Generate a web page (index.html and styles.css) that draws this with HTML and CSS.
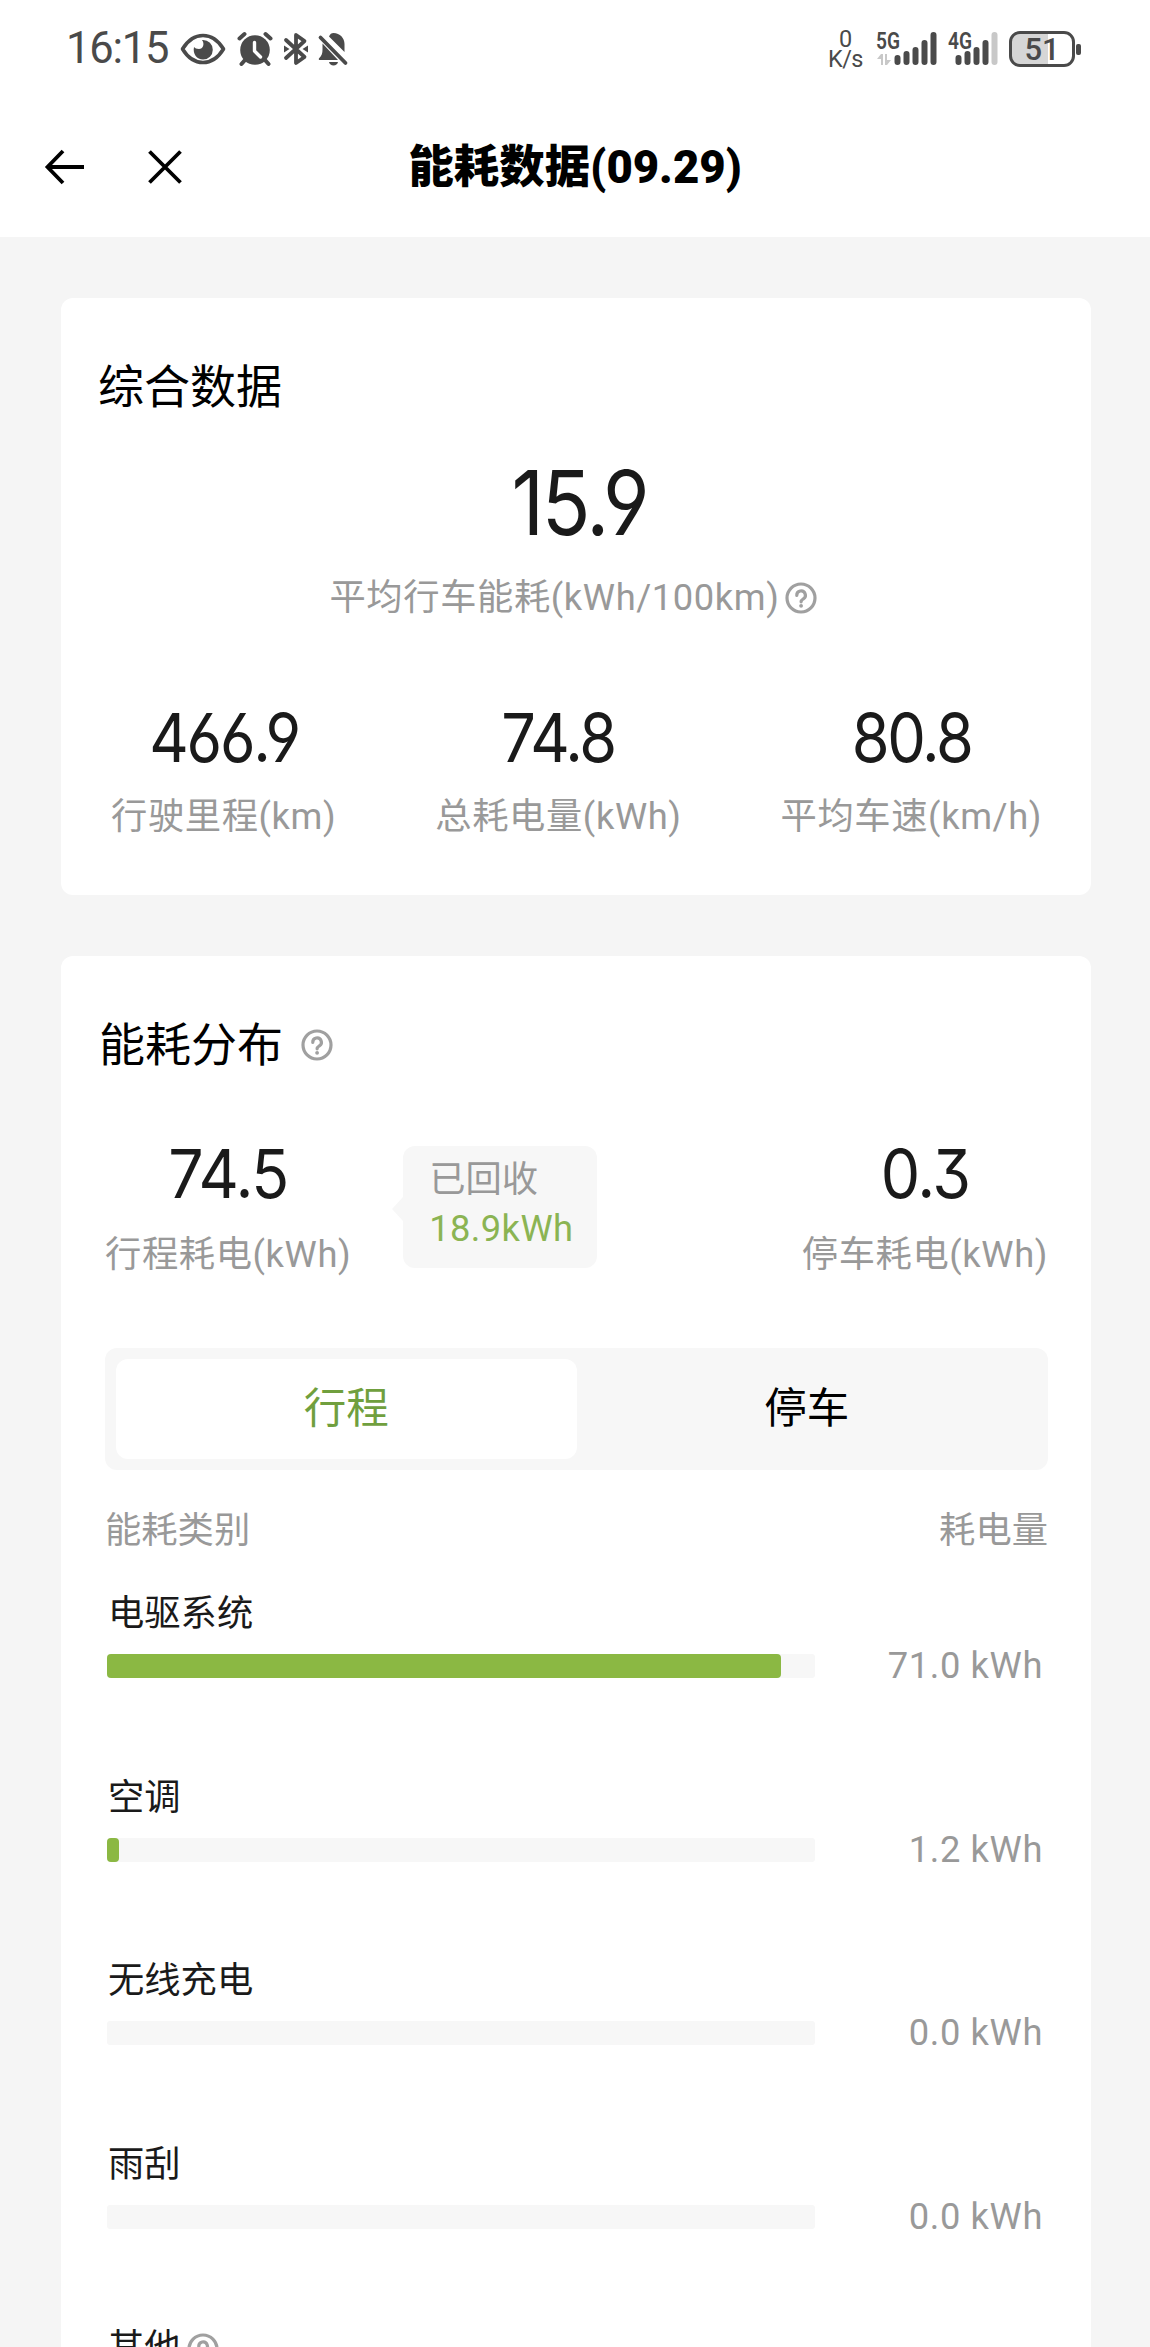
FILE: index.html
```html
<!DOCTYPE html>
<html lang="zh-CN">
<head>
    <meta charset="UTF-8">
    <title>能耗数据(09.29)</title>
    <link rel="stylesheet" href="styles.css">
</head>
<body>

<svg class="defs" width="0" height="0">
    <symbol id="help" viewBox="0 0 32 32">
        <circle cx="16" cy="16" r="14" fill="none" stroke="#a0a0a0" stroke-width="3.2"/>
        <path d="M11.8 13.400a4.300 4.300 0 1 1 6.600 3.400c-1.600 1.100-2.300 1.600-2.300 3" fill="none" stroke="#a0a0a0" stroke-width="3.2" stroke-linecap="round"/>
        <circle cx="16.1" cy="23.800" r="1.9" fill="#a0a0a0"/>
    </symbol>
</svg>

<div class="statusbar">
    <span class="time">16:15</span>
    <svg class="ic-eye" width="46" height="32" viewBox="0 0 46 32">
        <path d="M2.5 16C8 7 15 2.500 23 2.500S38 7 43.500 16C38 25 31 29.500 23 29.500S8 25 2.500 16z" fill="none" stroke="#4a4a4a" stroke-width="3.600" stroke-linejoin="round"/>
        <path d="M22 7c3 4 1 9-3 9-2.500 0-4-1-5-2-1.500 7 3 12.500 9 12.500a9.800 9.800 0 0 0 0-19.600z" fill="#4a4a4a"/>
    </svg>
    <svg class="ic-alarm" width="36" height="34" viewBox="0 0 36 34">
        <circle cx="18" cy="18" r="14.800" fill="#4a4a4a"/>
        <path d="M2.500 6.500L7.500 2M33.500 6.500L28.500 2M8 28l-3.500 4M28 28l3.500 4" stroke="#4a4a4a" stroke-width="4" stroke-linecap="round"/>
        <path d="M17.500 10.500v8.500l6 6" fill="none" stroke="#fff" stroke-width="3.400" stroke-linecap="round" stroke-linejoin="round"/>
    </svg>
    <svg class="ic-bt" width="26" height="34" viewBox="0 0 26 34">
        <path d="M3 8l18.500 17L13 31V3l8.500 6L3 26" fill="none" stroke="#4a4a4a" stroke-width="3.800" stroke-linecap="round" stroke-linejoin="round"/>
        <path d="M1 13.500l5.500 3.500L1 20.500zM25 13.500L19.500 17l5.500 3.500z" fill="#4a4a4a"/>
    </svg>
    <svg class="ic-bell" width="30" height="34" viewBox="0 0 30 34">
        <path d="M4.500 11.500L20 28H1.500c-.8 0-1-1.200-.4-1.800 2.800-2.600 3.400-5 3.400-8.700zM11 4.500C12 2 13.500 1 15.500 1c6.500 0 11 5 11 11v8z" fill="#4a4a4a"/>
        <path d="M2.500 5.500L27.500 31" stroke="#4a4a4a" stroke-width="3.800" stroke-linecap="round"/>
        <path d="M11 30h9c-.5 2.300-2.200 3.500-4.500 3.500S11.500 32.300 11 30z" fill="#4a4a4a"/>
    </svg>

    <div class="netspeed"><span>0</span><span>K/s</span></div>
    <svg class="sig5" width="62" height="36" viewBox="0 0 62 36">
        <text class="net" x="0" y="18" textLength="24" lengthAdjust="spacingAndGlyphs">5G</text>
        <path d="M1 28l4-5h2v11H5v-6zM9 23h2v6h4l-4 5H9z" fill="#c8c8c8"/>
        <g stroke="#4a4a4a" stroke-width="6" stroke-linecap="round">
            <path d="M21.500 27v4M30.500 23v8M39.500 19v12M48.500 12v19M57.500 4v27"/>
        </g>
    </svg>
    <svg class="sig4" width="52" height="36" viewBox="0 0 52 36">
        <text class="net" x="0" y="18" textLength="24" lengthAdjust="spacingAndGlyphs">4G</text>
        <g stroke="#4a4a4a" stroke-width="6" stroke-linecap="round">
            <path d="M10.500 27v4M19.500 23v8M28.500 19v12M37.500 12v19"/>
            <path d="M46.500 4v27" stroke="#c8c8c8"/>
        </g>
    </svg>
    <div class="battery"><span>51</span></div>
    <i class="battery-tip"></i>
</div>

<div class="navbar">
    <svg width="40" height="36" viewBox="0 0 40 36">
        <path d="M18 2L2.500 18 18 34M2.500 18H39" fill="none" stroke="#000" stroke-width="3.800"/>
    </svg>
    <svg width="34" height="34" viewBox="0 0 34 34">
        <path d="M1.500 1.500l31 31M32.500 1.500l-31 31" stroke="#000" stroke-width="3.800"/>
    </svg>
    <h1>能耗数据<span>(09.29)</span></h1>
</div>

<div class="card summary">
    <h2>综合数据</h2>
    <div class="main-value"><span class="num big">15.9</span></div>
    <div class="main-label">平均行车能耗(kWh/100km)<svg class="help"><use href="#help"/></svg></div>
    <div class="stats">
        <div class="stat"><span class="num">466.9</span><span class="label">行驶里程(km)</span></div>
        <div class="stat"><span class="num">74.8</span><span class="label">总耗电量(kWh)</span></div>
        <div class="stat"><span class="num">80.8</span><span class="label">平均车速(km/h)</span></div>
    </div>
</div>

<div class="card detail">
    <h2>能耗分布<svg class="help"><use href="#help"/></svg></h2>
    <div class="split">
        <div class="stat"><span class="num">74.5</span><span class="label">行程耗电(kWh)</span></div>
        <div class="bubble"><span>已回收</span><span class="green">18.9kWh</span></div>
        <div class="stat right"><span class="num">0.3</span><span class="label">停车耗电(kWh)</span></div>
    </div>
    <div class="tabs">
        <div class="tab active">行程</div>
        <div class="tab">停车</div>
    </div>
    <div class="list-head"><span>能耗类别</span><span>耗电量</span></div>
    <div class="row">
        <div class="name">电驱系统</div>
        <div class="line"><div class="track"><div class="fill" style="width: 95.2%"></div></div><span>71.0 kWh</span></div>
    </div>
    <div class="row">
        <div class="name">空调</div>
        <div class="line"><div class="track"><div class="fill" style="width: 1.7%"></div></div><span>1.2 kWh</span></div>
    </div>
    <div class="row">
        <div class="name">无线充电</div>
        <div class="line"><div class="track"></div><span>0.0 kWh</span></div>
    </div>
    <div class="row">
        <div class="name">雨刮</div>
        <div class="line"><div class="track"></div><span>0.0 kWh</span></div>
    </div>
    <div class="row">
        <div class="name">其他<svg class="help"><use href="#help"/></svg></div>
    </div>
</div>

</body>
</html>
```
FILE: styles.css
```css
* {
    box-sizing: border-box;
}

body {
    margin: 0;
    height: 2347px;
    overflow: hidden;
    background-color: #f5f5f5;
    font-family: Roboto, "Noto Sans CJK SC", sans-serif;
    font-size: 36.3px;
    color: #1a1a1a;
}

.defs {
    display: block;
}

svg {
    flex-shrink: 0;
    overflow: visible;
}

/* status bar */
.statusbar {
    display: flex;
    align-items: center;
    height: 98px;
    padding: 0 69px 0 66px;
    background-color: #fff;
    color: #4a4a4a;
}

.time {
    width: 114px;
    font-size: 43.5px;
    line-height: 50px;
    letter-spacing: -1.2px;
}

.ic-alarm {
    margin-left: 11px;
}

.ic-bt {
    margin-left: 10px;
}

.ic-bell {
    margin-left: 9px;
}

.netspeed {
    display: flex;
    flex-direction: column;
    align-items: center;
    margin-left: auto;
    font-size: 23.5px;
    line-height: 20px;
    letter-spacing: -0.5px;
}

.sig5 {
    margin-left: 13px;
}

.sig4 {
    margin-left: 10px;
}

.net {
    font-size: 23px;
    font-weight: 600;
    fill: #4a4a4a;
}

.battery {
    width: 66px;
    height: 36px;
    margin-left: 9px;
    border: 3px solid #4a4a4a;
    border-radius: 11px;
    background: linear-gradient(to right, #d6d6d6 36px, #fff 36px);
    text-align: center;
    font-size: 31px;
    font-weight: 500;
    line-height: 31px;
}

.battery-tip {
    width: 5px;
    height: 11px;
    margin-left: 1px;
    border-radius: 2px;
    background-color: #4a4a4a;
}

/* title bar */
.navbar {
    position: relative;
    display: flex;
    align-items: center;
    gap: 63px;
    height: 139px;
    padding: 0 45px 2px;
    background-color: #fff;
}

.navbar h1 {
    position: absolute;
    left: 0;
    right: 0;
    margin: 3px 0 0;
    text-align: center;
    font-size: 45.5px;
    font-weight: 900;
    line-height: 60px;
    color: #000;
}

/* cards */
.card {
    margin: 61px 59px 0 61px;
    border-radius: 12px;
    background-color: #fff;
}

.card h2 {
    display: flex;
    align-items: center;
    margin: 0;
    font-size: 46px;
    font-weight: 400;
    line-height: 60px;
    color: #000;
}

.help {
    width: 32px;
    height: 32px;
}

.label,
.main-label {
    line-height: 44px;
    letter-spacing: 0.6px;
    color: #999;
    white-space: nowrap;
}

.num {
    font-family: Inter, sans-serif;
    font-feature-settings: "cv03", "cv04", "cv09";
    font-size: 68px;
    line-height: 70px;
    letter-spacing: -2.5px;
    transform: scaleX(0.9);
}

.num.big {
    display: inline-block;
    font-size: 89px;
    line-height: 90px;
}

.split .num {
    letter-spacing: -1.5px;
    transform: scaleX(0.92);
}

.summary {
    height: 597px;
    padding: 59px 49px 0 37px;
}

.main-value {
    margin-top: 41px;
    padding-left: 18px;
    text-align: center;
}

.main-label {
    display: flex;
    justify-content: center;
    align-items: center;
    margin-top: 28px;
    padding-left: 6px;
}

.main-label .help {
    margin: 0 0 0 5px;
}

.stats {
    display: flex;
    justify-content: space-between;
    margin-top: 82px;
    padding-left: 13px;
}

.stat {
    display: flex;
    flex-direction: column;
    align-items: center;
}

.stat .label {
    margin-top: 23px;
}

.detail {
    height: 1451px;
    margin-top: 61px;
    padding: 59px 43px 0 44px;
}

.detail h2 {
    margin-left: -6px;
}

.detail h2 .help {
    margin: 0 0 0 18px;
}

.split {
    display: flex;
    align-items: flex-start;
    margin-top: 63px;
}

.split .label {
    margin-top: 25px;
}

.bubble {
    position: relative;
    display: flex;
    flex-direction: column;
    width: 194px;
    height: 122px;
    margin: 8px 0 0 52px;
    padding: 9px 0 0 26px;
    border-radius: 12px;
    background-color: #f7f7f7;
    line-height: 49px;
    color: #999;
}

.bubble::before {
    content: "";
    position: absolute;
    left: -11px;
    top: 51px;
    border: 12px solid transparent;
    border-left: 0;
    border-right: 11px solid #f7f7f7;
}

.bubble .green {
    letter-spacing: 0.4px;
    color: #8bb453;
}

.split .right {
    margin-left: auto;
}

.tabs {
    display: flex;
    height: 122px;
    margin-top: 71px;
    padding: 11px;
    border-radius: 12px;
    background-color: #f7f7f7;
}

.tab {
    flex: 1;
    border-radius: 12px;
    text-align: center;
    font-size: 42.5px;
    line-height: 100px;
    color: #000;
}

.tab.active {
    background-color: #fff;
    color: #709f3e;
}

.list-head {
    display: flex;
    justify-content: space-between;
    margin-top: 39px;
    line-height: 44px;
    color: #999;
}

.row {
    height: 183.6px;
    padding-left: 2px;
}

.list-head + .row {
    margin-top: 39px;
}

.name {
    display: flex;
    align-items: center;
    padding-left: 1px;
    line-height: 44px;
}

.name .help {
    margin: 2px 0 0 6px;
}

.line {
    display: flex;
    justify-content: space-between;
    align-items: center;
    margin-top: 8px;
    padding-right: 5px;
    line-height: 44px;
    letter-spacing: 0.6px;
    color: #999;
}

.track {
    width: 708px;
    height: 24px;
    border-radius: 3px;
    background-color: #f7f7f7;
}

.fill {
    height: 100%;
    border-radius: 4px;
    background-color: #8bb843;
}
```
